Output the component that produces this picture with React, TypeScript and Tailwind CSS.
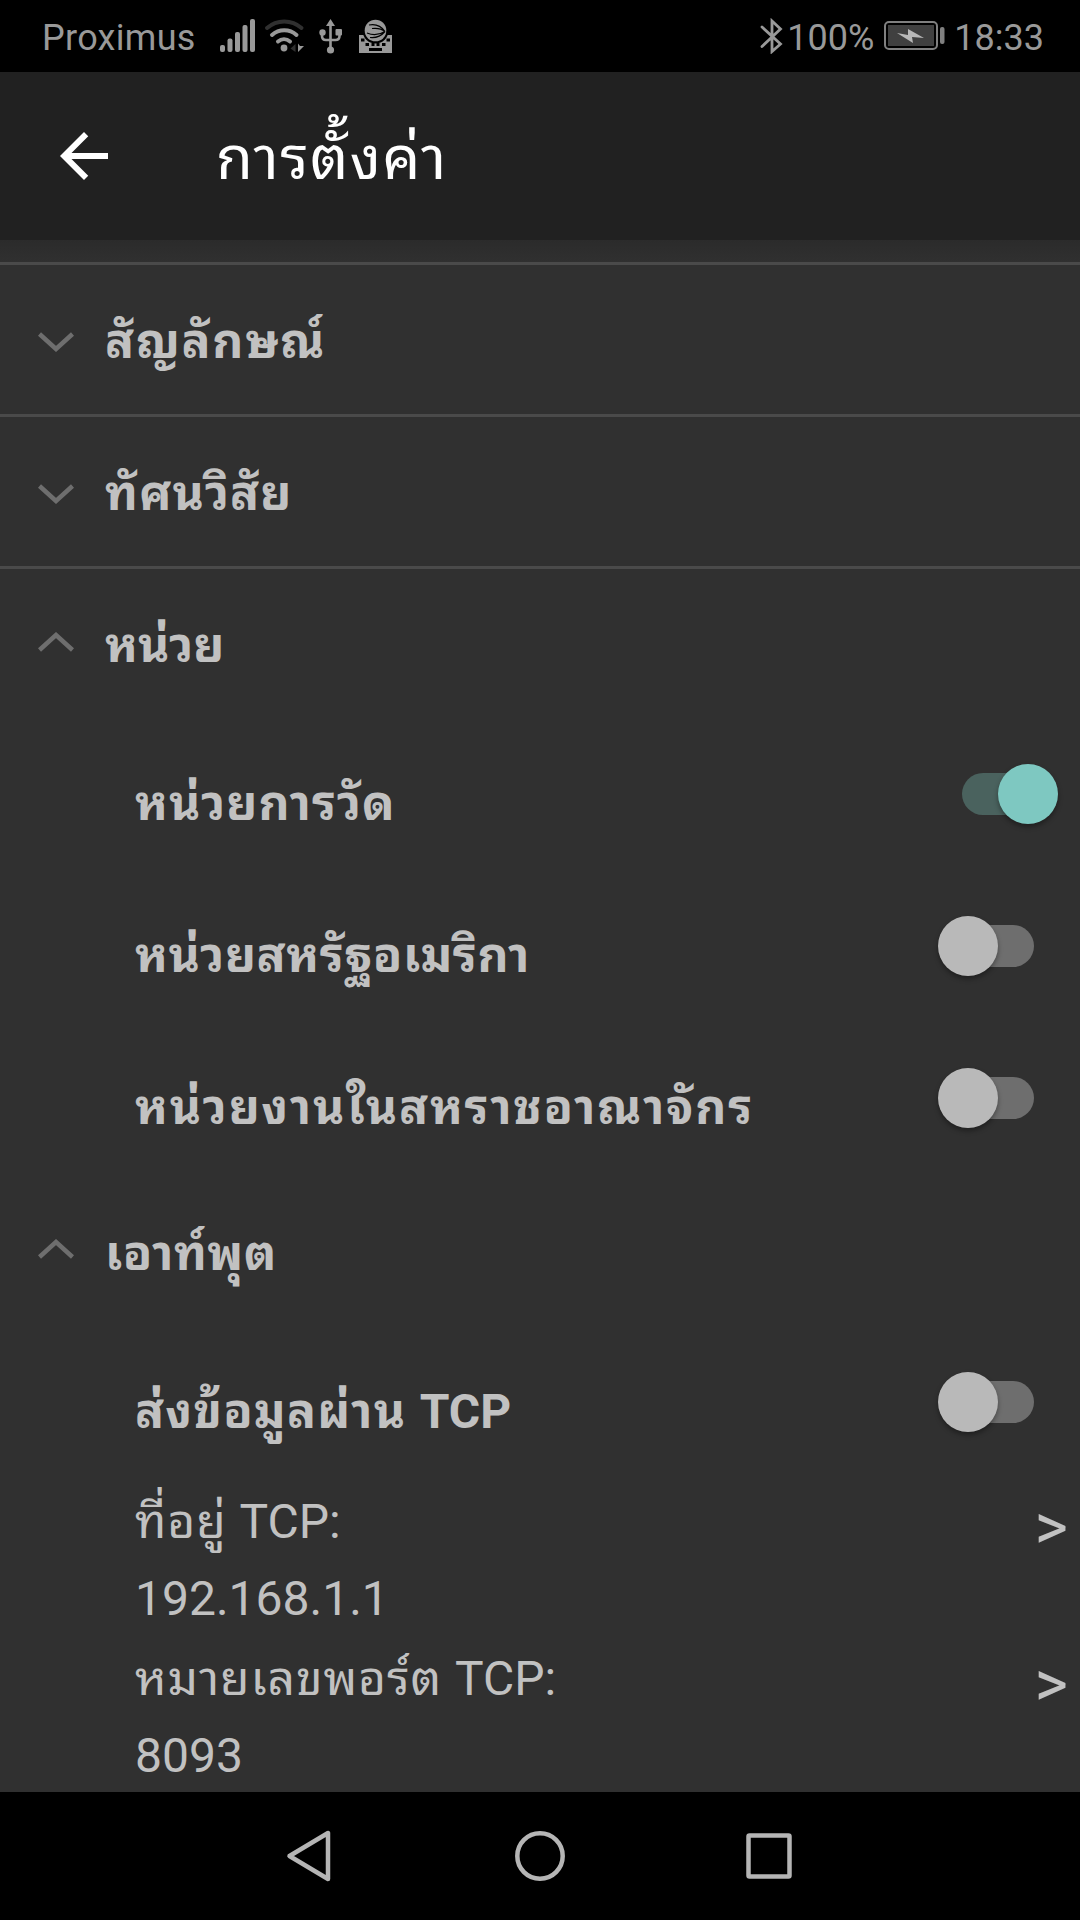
import type { ReactNode } from "react";

function StatusBar() {
  return (
    <div className="flex h-[72px] items-center bg-black pl-[42px] pr-[36px] text-[36px] leading-none text-[#999999]">
      <span className="w-[178px] pt-1 tracking-[0.3px]">Proximus</span>
      <svg width="180" height="72" viewBox="220 0 180 72" fill="#999999">
        <rect x="220" y="45" width="5" height="7" rx="2" />
        <rect x="227.5" y="38.5" width="5" height="13.5" rx="2" />
        <rect x="235" y="32" width="5" height="20" rx="2" />
        <rect x="242.5" y="25" width="5" height="27" rx="2" />
        <rect x="250" y="19" width="5" height="33" rx="2" />
        <g fill="none" strokeWidth="4" strokeLinecap="round">
          <path d="M267 28a26 26 0 0 1 34.5 0" stroke="#303030" />
          <path d="M272 35a18.5 18.5 0 0 1 24.5 0" stroke="#999999" />
          <path d="M278 41.5a9.5 9.5 0 0 1 12 0" stroke="#999999" />
        </g>
        <circle cx="284" cy="48" r="3.4" />
        <path d="M295.5 44v8l-5-3.5z" fill="#303030" />
        <path d="M298 43.5v8.5l6-6h-4z" />
        <path d="M330.5 23v28M322 33v3q0 4 4 4h9.5q4 0 4-4v-3" fill="none" stroke="#999999" strokeWidth="2.6" />
        <path d="M330.5 19l4.5 7h-9z" />
        <circle cx="322.5" cy="32.5" r="3.2" />
        <rect x="335.5" y="29" width="6.5" height="6.5" rx="1" />
        <circle cx="330.5" cy="50" r="3.6" />
        <path d="M359 35h33v18h-33z" />
        <circle cx="375.5" cy="30.5" r="13" fill="#000" />
        <circle cx="375.5" cy="30.5" r="10.8" />
        <path
          d="M369 25q10-2 16 6.5M372 28.5q8-1 13 3M367 33q9 4 18-1.5M370 37.5q9 1 15-6"
          fill="none"
          stroke="#000"
          strokeWidth="1.2"
        />
        <path d="M361 38.5h3.5v3H361zM386.5 38.5h3.5v3h-3.5zM365.5 43h3.5v3h-3.5zM371.5 43h3v3h-3zM376.5 43h3v3h-3zM382 43h3.5v3H382zM369 48h13v3h-13z" fill="#000" />
      </svg>
      <div className="flex-1" />
      <svg width="24" height="36" viewBox="0 0 24 36" fill="none" stroke="#999999" strokeWidth="2.8" strokeLinecap="round">
        <path d="M3 9l18.500 17-8.500 7.500V3l8.500 8L3 28.5" />
      </svg>
      <span className="pl-1 pt-1">100%</span>
      <svg className="ml-[10px]" width="62" height="30" viewBox="0 0 62 30">
        <rect x="1" y="1" width="52" height="27" rx="4" fill="none" stroke="#808080" strokeWidth="2" />
        <rect x="4" y="4" width="46" height="21" fill="#404040" />
        <path d="M13 12l11 2V8l16 9-12-1 1 6z" fill="#b8b8b8" />
        <rect x="56" y="6" width="4.5" height="17" rx="2" fill="#808080" />
      </svg>
      <span className="pl-2 pt-1">18:33</span>
    </div>
  );
}

function Chevron({ open }: { open?: boolean }) {
  return (
    <svg width="36" height="20" viewBox="0 0 36 20" fill="none" stroke="#6e6e6e" strokeWidth="4.5">
      <path d={open ? "M1.5 18L18 3l16.500 15" : "M1.5 2L18 17 34.5 2"} />
    </svg>
  );
}

type SectionProps = { title: string; open?: boolean; divider?: boolean; tracking?: string };

function Section({ title, open, divider, tracking = "" }: SectionProps) {
  return (
    <div className={`flex h-[152px] items-center pl-[38px] ${divider ? "border-t-[3px] border-[#4a4a4a]" : ""}`}>
      <div className={open ? "pb-[3px]" : "pt-[5px]"}>
        <Chevron open={open} />
      </div>
      <h2 className={`pl-[31px] text-[48px] font-bold leading-[72px] ${divider ? "pt-[5px]" : "pt-[7px]"} ${tracking}`}>
        {title}
      </h2>
    </div>
  );
}

function Switch({ on }: { on?: boolean }) {
  return (
    <div className="relative flex h-[60px] w-[120px] items-center justify-center">
      <div className={`h-[42px] w-[72px] rounded-full ${on ? "bg-[#4a625e]" : "bg-[#6e6e6e]"}`} />
      <div
        className={`absolute top-0 size-[60px] rounded-full shadow-[0_3px_5px_rgba(0,0,0,0.35)] ${
          on ? "right-0 bg-[#7ec8c1]" : "left-0 bg-[#b9b9b9]"
        }`}
      />
    </div>
  );
}

function SwitchRow({ label, on, tracking = "" }: { label: ReactNode; on?: boolean; tracking?: string }) {
  return (
    <div className="flex h-[152px] items-center justify-between pl-[135px] pr-[22px]">
      <span className={`pt-5 text-[48px] font-bold leading-[72px] ${tracking}`}>{label}</span>
      <Switch on={on} />
    </div>
  );
}

function ValueRow({ label, value }: { label: string; value: string }) {
  return (
    <div className="flex h-[157px] justify-between pl-[135px] pr-[12px] pt-[5px] text-[48px] leading-[77px]">
      <div>
        <p>
          <span className="tracking-[0.9px]">{label} </span>TCP:
        </p>
        <p>{value}</p>
      </div>
      <span className="pt-[6px] text-[64px]">&gt;</span>
    </div>
  );
}

export default function App() {
  return (
    <div className="flex h-[1920px] w-[1080px] flex-col overflow-hidden bg-[#303030] font-[Roboto,'Noto_Sans_Thai_Looped','Noto_Sans_Thai',sans-serif] text-[#c1c1c1]">
      <StatusBar />
      <header className="flex h-[168px] items-center bg-[#212121] pl-12 text-white">
        <svg width="72" height="72" viewBox="0 0 24 24" fill="currentColor">
          <path d="M20 11H7.83l5.59-5.59L12 4l-8 8 8 8 1.41-1.41L7.83 13H20v-2z" />
        </svg>
        <h1 className="pl-24 pt-[5px] text-[60px] leading-[90px] tracking-[1.4px]">การตั้งค่า</h1>
      </header>
      <main className="h-[1552px] overflow-hidden">
        <div className="h-[22px] bg-gradient-to-b from-[#2b2b2b] to-[#303030]" />
        <Section title="สัญลักษณ์" divider tracking="tracking-[1.7px]" />
        <Section title="ทัศนวิสัย" divider tracking="tracking-[1.1px]" />
        <Section title="หน่วย" open divider />
        <SwitchRow label="หน่วยการวัด" on tracking="tracking-[1px]" />
        <SwitchRow label="หน่วยสหรัฐอเมริกา" tracking="tracking-[0.55px]" />
        <SwitchRow label="หน่วยงานในสหราชอาณาจักร" tracking="tracking-[1.8px]" />
        <Section title="เอาท์พุต" open tracking="tracking-[0.5px]" />
        <SwitchRow
          label={
            <>
              <span className="tracking-[1.3px]">ส่งข้อมูลผ่าน </span>TCP
            </>
          }
        />
        <ValueRow label="ที่อยู่" value="192.168.1.1" />
        <ValueRow label="หมายเลขพอร์ต" value="8093" />
      </main>
      <nav className="flex h-32 items-center justify-center bg-black">
        <svg width="510" height="54" viewBox="285 1829 510 54" fill="none" stroke="#b5b5b5" strokeWidth="4.5" strokeLinejoin="round">
          <path d="M289.5 1856l38.5-23v46z" />
          <circle cx="540" cy="1856" r="22.7" />
          <rect x="748.5" y="1835.5" width="41" height="41" rx="1" />
        </svg>
      </nav>
    </div>
  );
}
